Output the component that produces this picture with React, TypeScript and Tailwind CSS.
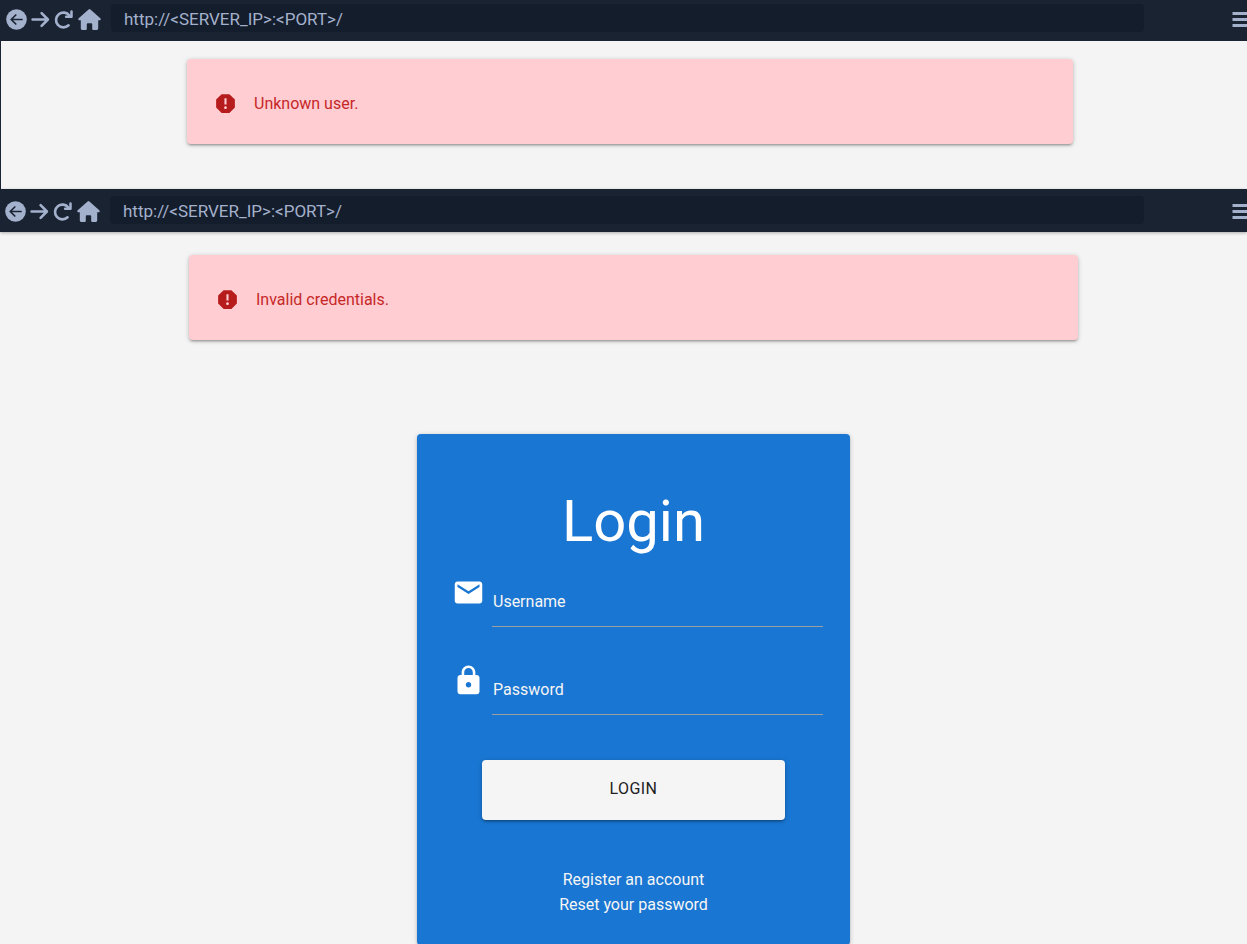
import React from "react";
import { MdEmail, MdLock, MdReport } from "react-icons/md";

const SURFACE_SHADOW =
  "shadow-[0_2px_2px_0_rgba(0,0,0,0.14),0_3px_1px_-2px_rgba(0,0,0,0.12),0_1px_5px_0_rgba(0,0,0,0.2)]";

function BackIcon() {
  return (
    <svg viewBox="0 0 21 21" className="size-[21px]" aria-hidden="true">
      <circle cx="10.5" cy="10.5" r="10.3" fill="#a4b1cd" />
      <path d="M16 10.5H5.4M9.8 6 5.2 10.5 9.8 15" fill="none" stroke="#1a2332" strokeWidth="1.7" strokeLinecap="round" strokeLinejoin="round" />
    </svg>
  );
}

function ForwardIcon() {
  return (
    <svg viewBox="0 0 19 21" className="h-[21px] w-[19px]" aria-hidden="true">
      <path d="M1.6 10.5H16.8M10.6 4.1 16.9 10.5 10.6 16.9" fill="none" stroke="#a4b1cd" strokeWidth="2.6" strokeLinecap="round" strokeLinejoin="round" />
    </svg>
  );
}

function ReloadIcon() {
  return (
    <svg viewBox="0 0 20 21" className="h-[21px] w-[20px]" aria-hidden="true">
      <path d="M15.4 6.6A7.4 7.4 0 1 0 14.6 16.3" fill="none" stroke="#a4b1cd" strokeWidth="2.6" strokeLinecap="round" />
      <path d="M17.5 2.4V7.8H12.1" fill="none" stroke="#a4b1cd" strokeWidth="2.5" strokeLinecap="round" strokeLinejoin="round" />
    </svg>
  );
}

function HomeIcon() {
  return (
    <svg viewBox="0 0 23 21" className="h-[21px] w-[23px]" aria-hidden="true">
      <path d="M10.6.4a1.4 1.4 0 0 1 1.8 0L22.3 9.3c.8.8.4 2-.7 2h-1.4v8.2c0 .8-.6 1.400-1.400 1.400h-3.700c-.5 0-.9-.4-.9-.9v-4.600c0-.6-.5-1.100-1.100-1.100h-3.200c-.6 0-1.100.5-1.100 1.100V20c0 .5-.4.9-.9.9H4.200c-.8 0-1.400-.6-1.400-1.400v-8.200H1.400c-1.100 0-1.500-1.200-.7-2z" fill="#a4b1cd" />
    </svg>
  );
}

function BrowserBar({ label, className }: { label: string; className: string }) {
  return (
    <nav aria-label={label} className={`flex items-start bg-[#1a2332] ${className}`}>
      <div className="flex pt-[5px]">
        <button type="button" aria-label="Back"><BackIcon /></button>
        <button type="button" aria-label="Forward" className="ml-1"><ForwardIcon /></button>
        <button type="button" aria-label="Reload" className="ml-1"><ReloadIcon /></button>
        <button type="button" aria-label="Home" className="ml-1"><HomeIcon /></button>
      </div>
      <input
        type="text"
        aria-label="Address"
        defaultValue="http://<SERVER_IP>:<PORT>/"
        className="ml-[10px] h-7 min-w-0 flex-1 rounded bg-[#141d2b] px-[13px] pt-px text-[17px] leading-6 text-[#a4b1cd] outline-none"
      />
      <button type="button" aria-label="Menu" className="ml-[88px] pt-2">
        <svg viewBox="0 0 15 15" className="size-[15px]" aria-hidden="true">
          <path d="M0.5 1.5H15M0.5 7.5H15M0.5 13.5H15" fill="none" stroke="#a4b1cd" strokeWidth="2.8" />
        </svg>
      </button>
    </nav>
  );
}

function Alert({ children }: { children: React.ReactNode }) {
  return (
    <div role="alert" className={`flex h-[85px] items-center gap-4 rounded-sm bg-[#ffcdd2] px-[26px] pt-1 text-base text-[#c62828] ${SURFACE_SHADOW}`}>
      <MdReport className="size-[25px] text-[#b71c1c]" aria-hidden="true" />
      <p>{children}</p>
    </div>
  );
}

function Field({ id, label, type, icon }: { id: string; label: string; type: string; icon: React.ReactNode }) {
  return (
    <div className="flex h-[88px] items-start gap-[7px] pl-2">
      {icon}
      <div className="relative flex-1">
        <input
          id={id}
          name={id}
          type={type}
          placeholder=" "
          className="peer block h-[51px] w-full border-b border-[#9e9e9e] bg-transparent px-px text-base text-white outline-none"
        />
        <label
          htmlFor={id}
          className="absolute top-[14px] left-px cursor-text text-base text-[#f5f5f5] peer-focus:-translate-y-5 peer-[:not(:placeholder-shown)]:-translate-y-5"
        >
          {label}
        </label>
      </div>
    </div>
  );
}

export default function App() {
  return (
    <div className="flex min-h-screen flex-col bg-[#f4f4f4] font-['Roboto',sans-serif]">
      <section>
        <BrowserBar label="Browser, unknown user" className="h-[41px] pt-1 pl-1.5" />
        <div className="h-[148px] border-l border-[#1a2332] pt-[18px] pr-[174px] pl-[186px]">
          <Alert>Unknown user.</Alert>
        </div>
      </section>

      <section className="flex grow flex-col">
        <BrowserBar label="Browser, invalid credentials" className="h-[43px] pt-[7px] pl-[5px] shadow-[0_1px_3px_rgba(0,0,0,0.3)]" />
        <main className="flex grow flex-col pt-[23px] pr-[169px] pl-[189px]">
          <Alert>Invalid credentials.</Alert>
          <form
            onSubmit={(event) => event.preventDefault()}
            className={`mx-auto mt-[94px] flex w-[433px] grow flex-col rounded-sm bg-[#1976d2] px-[27px] pt-[55px] pb-7 ${SURFACE_SHADOW}`}
          >
            <h1 className="mb-[23px] text-center text-[58px] leading-16 text-white">Login</h1>
            <Field id="username" label="Username" type="text" icon={<MdEmail className="size-[33px] text-white" aria-hidden="true" />} />
            <Field id="password" label="Password" type="password" icon={<MdLock className="size-[33px] text-white" aria-hidden="true" />} />
            <button
              type="submit"
              className={`mx-auto mt-2 h-[60px] w-[303px] rounded-sm bg-[#f5f5f5] pb-[3px] text-base tracking-wide text-[#212121] uppercase ${SURFACE_SHADOW}`}
            >
              Login
            </button>
            <div className="mt-[47px] flex flex-col items-center text-base leading-[25px] text-[#f5f5f5]">
              <a href="#register">Register an account</a>
              <a href="#reset">Reset your password</a>
            </div>
          </form>
        </main>
      </section>
    </div>
  );
}
